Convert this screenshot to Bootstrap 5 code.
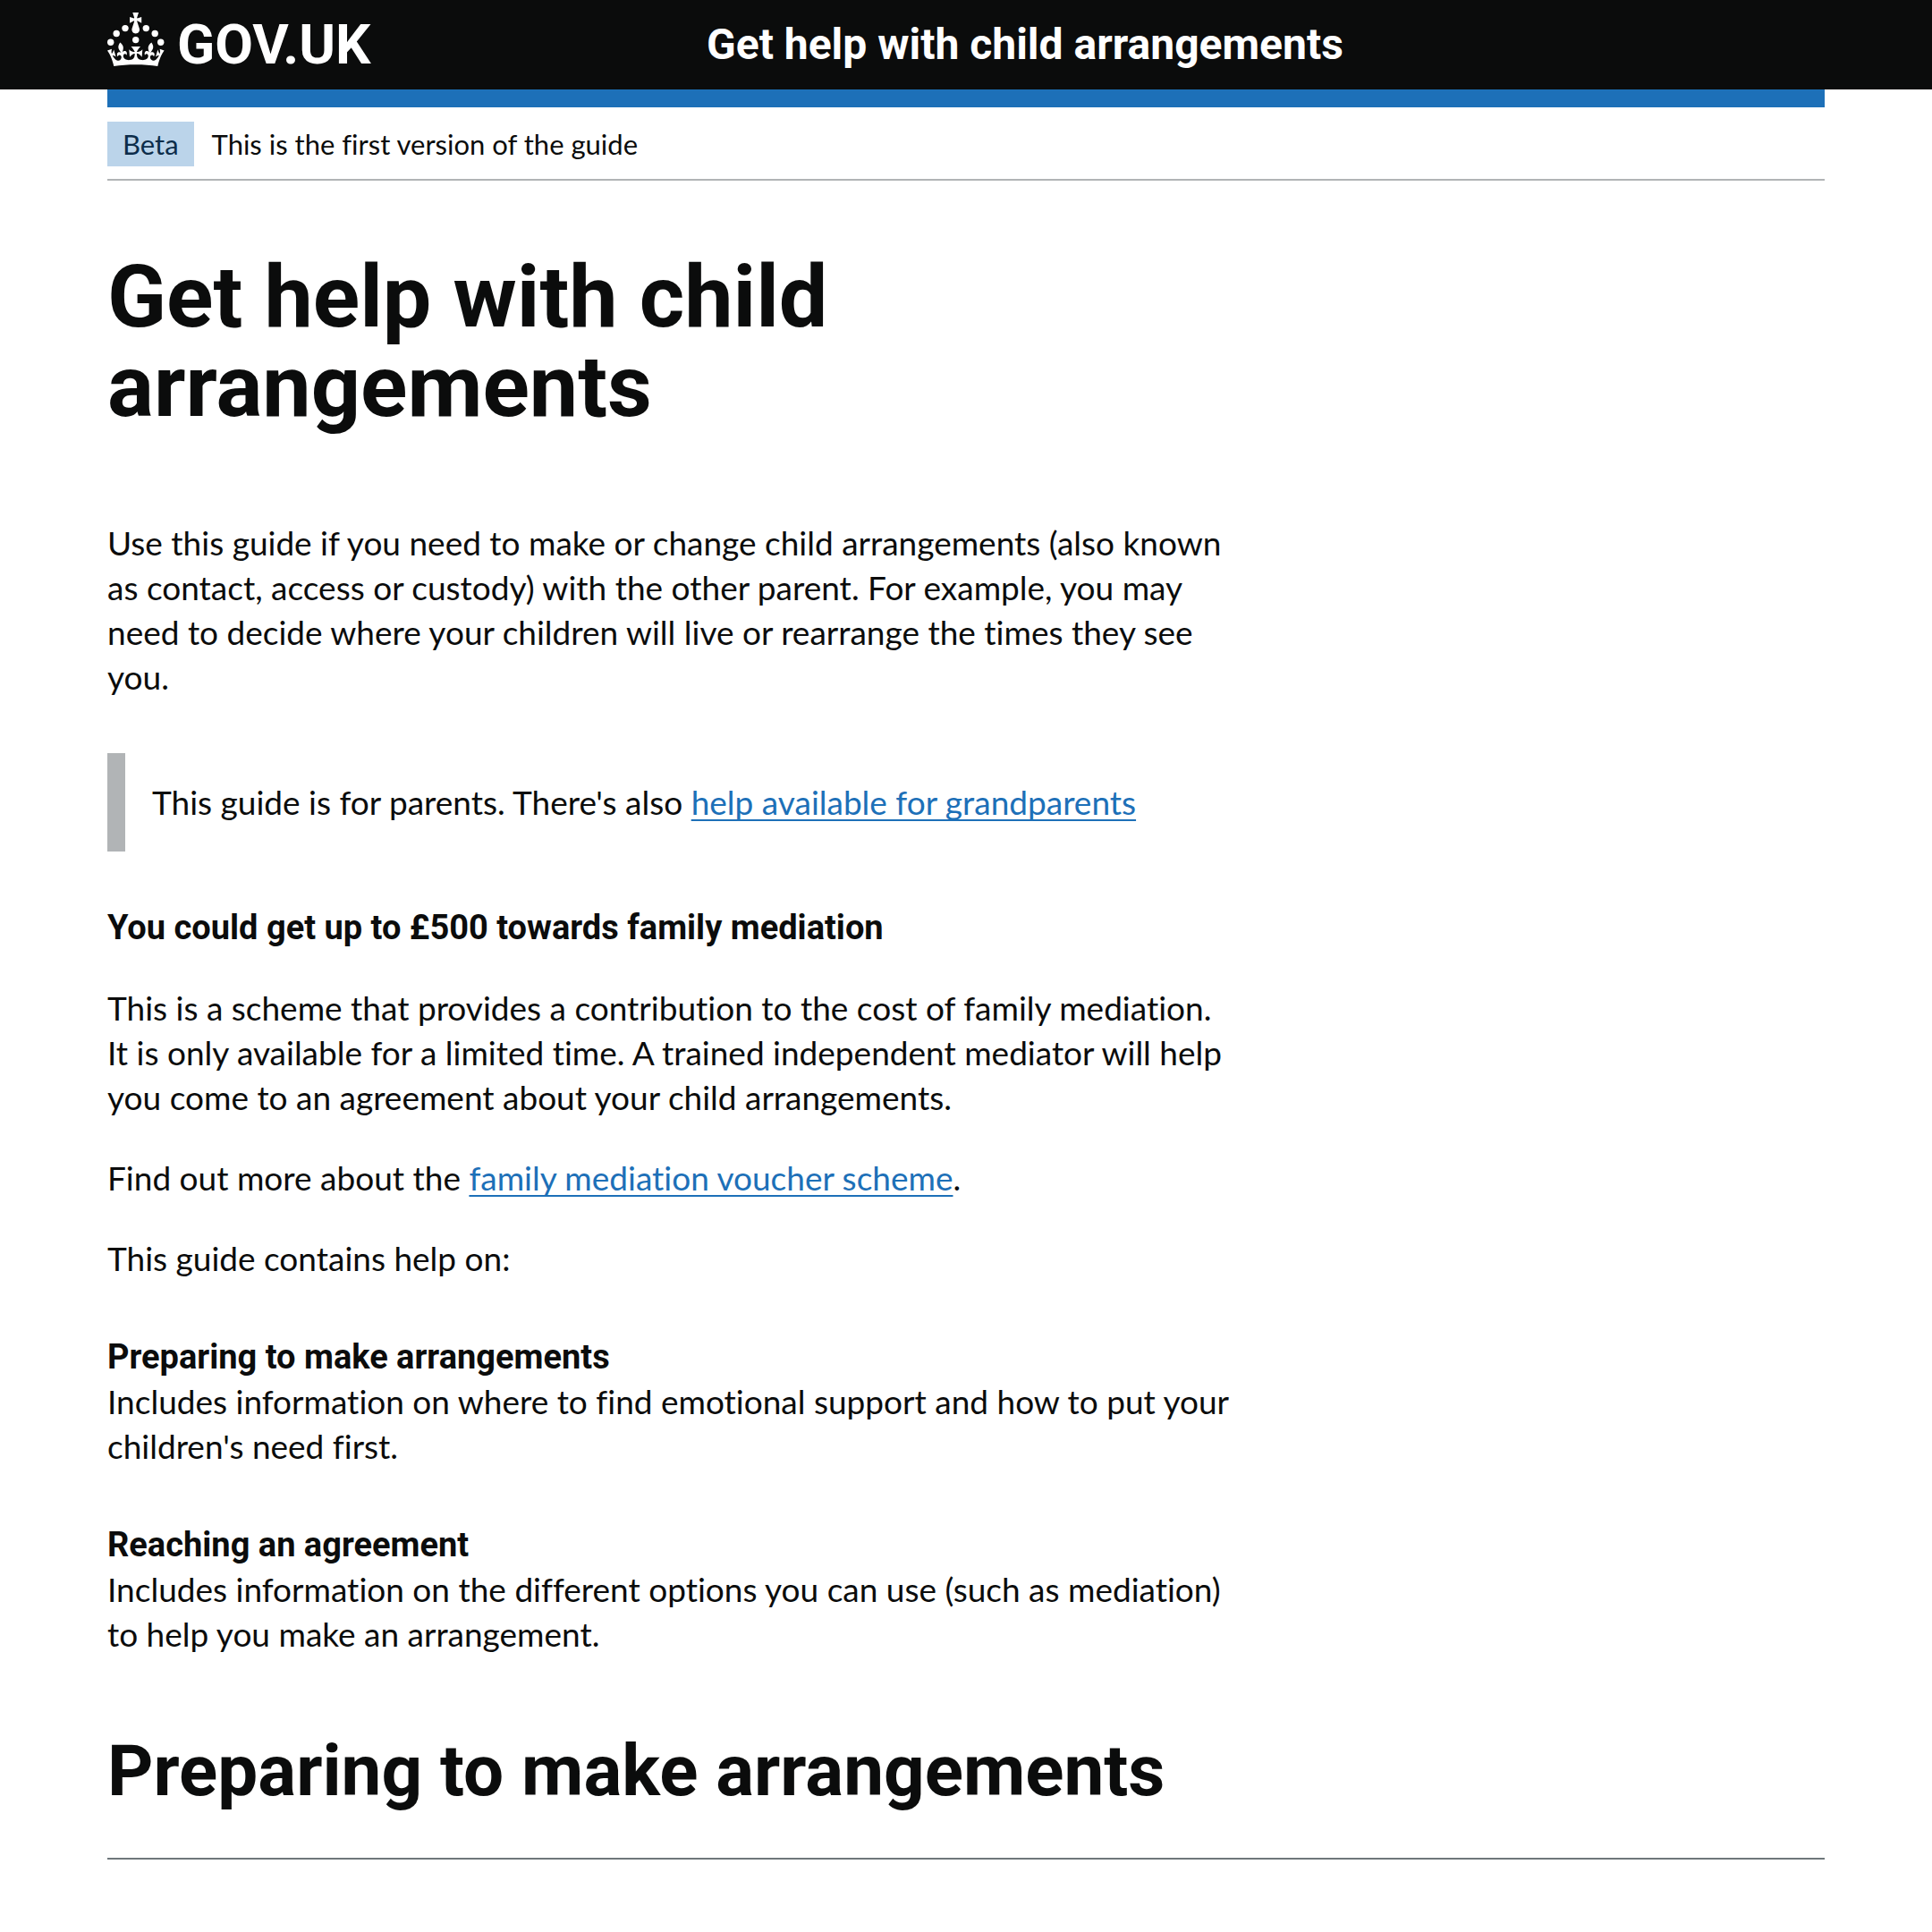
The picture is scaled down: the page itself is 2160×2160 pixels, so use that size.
<!DOCTYPE html>
<html lang="en">
<head>
<meta charset="utf-8">
<meta name="viewport" content="width=device-width, initial-scale=1">
<title>Get help with child arrangements - GOV.UK</title>
<link href="https://cdn.jsdelivr.net/npm/bootstrap@5.3.0/dist/css/bootstrap.min.css" rel="stylesheet">
<style>
  body { font-family: Lato, "Noto Sans", sans-serif; font-size: 37px; line-height: 50px; color: #0b0c0c; background: #fff; font-variant-ligatures: none; }
  h1, h2, h3, .logo-link, .service-name { font-family: Roboto, "Noto Sans", sans-serif; }
  .page-width { padding-left: 120px; padding-right: 120px; }
  .row { --bs-gutter-x: 60px; }
  .site-header { background: #0b0c0c; height: 100px; }
  .site-header a { color: #fff; text-decoration: none; }
  .logo-link { gap: 14px; font-size: 62px; line-height: 60px; font-weight: 700; }
  .logo-link svg { margin-bottom: 12px; }
  .service-name { font-size: 48px; line-height: 50px; font-weight: 700; padding-left: 10px; white-space: nowrap; }
  .brand-bar { height: 20px; background: #1d70b8; }
  .phase-banner { padding: 16px 0 14px; border-bottom: 2px solid #b1b4b6; gap: 20px; font-size: 31px; }
  .phase-tag { background: #bbd4ea; color: #0c2d4a; padding: 0 17px; }
  h1 { font-size: 97px; line-height: 100px; font-weight: 700; margin: 80px 0 100px; }
  p { margin-bottom: 40px; }
  .inset { border-left: 20px solid #b1b4b6; padding: 30px; margin: 60px 0; }
  main a { color: #1d70b8; text-decoration-thickness: 2px; text-underline-offset: 5px; text-decoration-skip-ink: none; }
  main h3 { font-size: 38px; line-height: 50px; font-weight: 700; margin: 0; }
  main h3.lead-in { margin-bottom: 40px; }
  .topic { margin: 60px 0; }
  h2 { font-size: 80px; line-height: 80px; font-weight: 700; margin: 0 0 57px; padding-top: 28px; }
  .section-rule { border: 0; border-top: 2px solid #6f777b; opacity: 1; margin: 0; }
</style>
</head>
<body>
<header class="site-header d-flex align-items-center">
  <div class="container-fluid page-width">
    <div class="row align-items-center">
      <div class="col-4 d-flex">
        <a href="#" class="logo-link d-inline-flex align-items-center" aria-label="GOV.UK">
          <svg width="64" height="60" viewBox="0 0 64 60" fill="#fff" aria-hidden="true">
            <circle cx="20" cy="17.6" r="3.7"/><circle cx="10.2" cy="23.5" r="3.7"/><circle cx="3.7" cy="33.2" r="3.7"/><circle cx="31.7" cy="30.6" r="3.7"/><circle cx="43.3" cy="17.6" r="3.7"/><circle cx="53.2" cy="23.5" r="3.7"/><circle cx="59.7" cy="33.2" r="3.7"/>
            <path d="M33.1,9.8c.2-.1.3-.3.5-.5l4.6,2.4v-6.8l-4.6,1.5c-.1-.2-.3-.3-.5-.5l1.9-5.9h-6.7l1.9,5.9c-.2.1-.3.3-.5.5l-4.6-1.5v6.8l4.6-2.4c.1.2.3.3.5.5l-2.6,8c-.9,2.8,1.2,5.7,4.1,5.7h0c3,0,5.1-2.9,4.1-5.7l-2.6-8ZM37,37.9s-3.4,3.8-4.1,6.1c2.2,0,4.2-.5,6.4-2.8l-.7,8.5c-2-2.8-4.4-4.1-5.7-3.8.1,3.1.5,6.7,5.8,7.2,3.7.3,6.7-1.5,7-3.8.4-2.6-2-4.3-3.7-1.6-1.4-4.5,2.4-6.1,4.9-3.2-1.9-4.5-1.8-7.7,2.4-10.9,3,4,2.6,7.3-1.2,11.1,2.4-1.3,6.2,0,4,4.6-1.2-2.8-3.7-2.2-4.2.2-.3,1.7.7,3.7,3,4.2,1.9.3,4.7-.9,7-5.9-1.3,0-2.4.7-3.9,1.7l2.4-8c.6,2.3,1.4,3.7,2.2,4.5.6-1.6.5-2.8,0-5.3l5,1.8c-2.6,3.6-5.2,8.7-7.3,17.5-7.4-1.1-15.7-1.7-24.5-1.7h0c-8.8,0-17.1.6-24.5,1.7-2.1-8.9-4.7-13.9-7.3-17.5l5-1.8c-.5,2.5-.6,3.7,0,5.3.8-.8,1.6-2.3,2.2-4.5l2.4,8c-1.5-1-2.6-1.7-3.9-1.7,2.3,5,5.2,6.2,7,5.9,2.3-.4,3.3-2.4,3-4.2-.5-2.4-3-3.1-4.2-.2-2.2-4.6,1.6-6,4-4.6-3.7-3.7-4.2-7.1-1.2-11.1,4.2,3.2,4.3,6.4,2.4,10.9,2.5-2.8,6.3-1.3,4.9,3.2-1.8-2.7-4.1-1-3.7,1.6.3,2.3,3.3,4.1,7,3.8,5.4-.5,5.7-4.2,5.8-7.2-1.3-.2-3.7,1-5.7,3.8l-.7-8.5c2.2,2.3,4.2,2.7,6.4,2.8-.7-2.3-4.1-6.1-4.1-6.1h10.6Z"/>
          </svg>
          <span>GOV.UK</span>
        </a>
      </div>
      <div class="col-8"><a href="#" class="service-name d-block">Get help with child arrangements</a></div>
    </div>
  </div>
</header>
<div class="container-fluid page-width">
  <div class="brand-bar"></div>
  <div class="phase-banner d-flex align-items-center">
    <strong class="phase-tag fw-normal">Beta</strong>
    <span>This is the first version of the guide</span>
  </div>
  <main>
    <div class="row">
      <div class="col-8">
        <h1>Get help with child<br>arrangements</h1>
        <p>Use this guide if you need to make or change child arrangements (also known as contact, access or custody) with the other parent. For example, you may need to decide where your children will live or rearrange the times they see you.</p>
        <div class="inset">This guide is for parents. There's also <a href="#">help available for grandparents</a></div>
        <h3 class="lead-in">You could get up to £500 towards family mediation</h3>
        <p>This is a scheme that provides a contribution to the cost of family mediation. It is only available for a limited time. A trained independent mediator will help you come to an agreement about your child arrangements.</p>
        <p>Find out more about the <a href="#">family mediation voucher scheme</a>.</p>
        <p>This guide contains help on:</p>
        <section class="topic">
          <h3>Preparing to make arrangements</h3>
          <div>Includes information on where to find emotional support and how to put your children's need first.</div>
        </section>
        <section class="topic">
          <h3>Reaching an agreement</h3>
          <div>Includes information on the different options you can use (such as mediation) to help you make an arrangement.</div>
        </section>
      </div>
    </div>
    <h2>Preparing to make arrangements</h2>
    <hr class="section-rule">
  </main>
</div>
<script src="https://cdn.jsdelivr.net/npm/bootstrap@5.3.0/dist/js/bootstrap.bundle.min.js"></script>
</body>
</html>
